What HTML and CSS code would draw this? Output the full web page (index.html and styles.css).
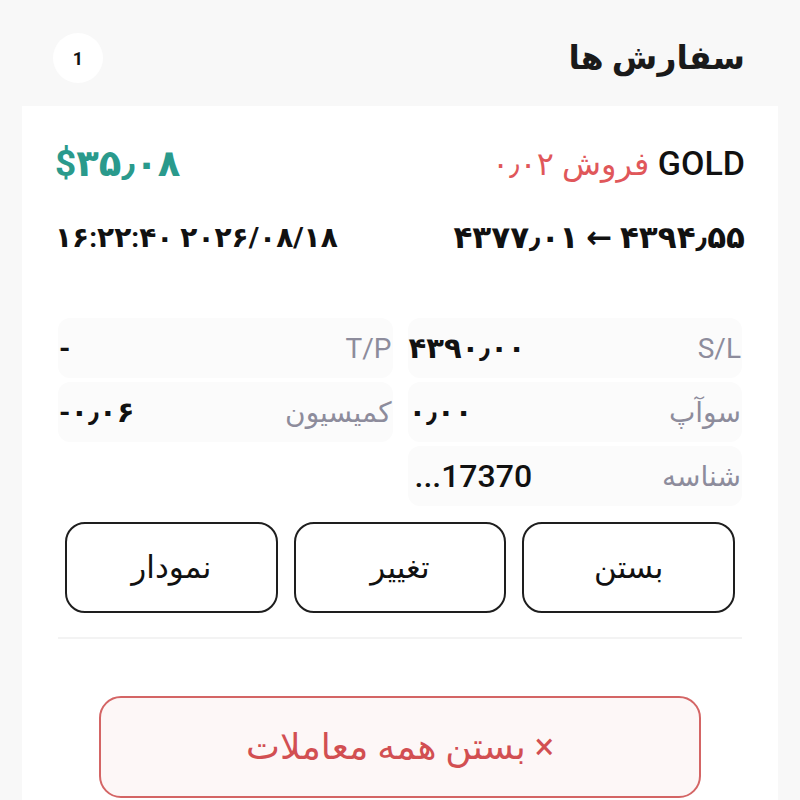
FILE: index.html
```html
<!DOCTYPE html>
<html lang="fa" dir="rtl">
<head>
    <meta charset="UTF-8">
    <meta name="viewport" content="width=device-width, initial-scale=1.0">
    <title>سفارش ها</title>
    <link rel="stylesheet" href="styles.css">
</head>
<body>
    <div class="page-header">
        <h1 class="page-title">سفارش ها</h1>
        <span class="count-badge">1</span>
    </div>

    <div class="order-card">
        <!-- Symbol and profit -->
        <div class="order-top">
            <div class="symbol">GOLD <span class="side-sell">فروش ۰٫۰۲</span></div>
            <div class="profit">$۳۵٫۰۸</div>
        </div>

        <div class="order-sub">
            <div class="prices">۴۳۹۴٫۵۵ ← ۴۳۷۷٫۰۱</div>
            <div class="open-time">۲۰۲۶/۰۸/۱۸ ۱۶:۲۲:۴۰</div>
        </div>

        <!-- Details -->
        <div class="details">
            <div class="detail">
                <span class="label">S/L</span>
                <span class="value">۴۳۹۰٫۰۰</span>
            </div>
            <div class="detail">
                <span class="label">T/P</span>
                <span class="value">-</span>
            </div>
            <div class="detail">
                <span class="label">سوآپ</span>
                <span class="value">۰٫۰۰</span>
            </div>
            <div class="detail">
                <span class="label">کمیسیون</span>
                <span class="value">۰٫۰۶-</span>
            </div>
            <div class="detail">
                <span class="label">شناسه</span>
                <span class="value latin">17370...</span>
            </div>
        </div>

        <div class="actions">
            <button class="action-btn">بستن</button>
            <button class="action-btn">تغییر</button>
            <button class="action-btn">نمودار</button>
        </div>

        <div class="divider"></div>

        <button class="close-all">× بستن همه معاملات</button>
    </div>
</body>
</html>
```

FILE: styles.css
```css
:root {
    --sell-color: #e0575a;
    --profit-color: #2a9a8c;
    --label-color: #8d8c9c;
    --bg-page: #f8f8f8;
}

* {
    margin: 0;
    padding: 0;
    box-sizing: border-box;
    font-family: Roboto, "DejaVu Sans", sans-serif;
}

body {
    width: 800px;
    height: 800px;
    overflow: hidden;
    background: var(--bg-page);
    color: #111;
}

.page-header {
    display: flex;
    justify-content: space-between;
    align-items: center;
    padding: 33px 55px 23px 53px;
}

.page-title {
    font-size: 33px;
    font-weight: bold;
    line-height: 50px;
    color: #1a1a1a;
}

.count-badge {
    display: flex;
    align-items: center;
    justify-content: center;
    width: 50px;
    height: 50px;
    border-radius: 50%;
    background: #fff;
    font-size: 18px;
    font-weight: bold;
}

.order-card {
    margin: 0 22px;
    min-height: 700px;
    background: #fff;
    padding: 37px 33px 0;
}

.order-top,
.order-sub {
    display: flex;
    justify-content: space-between;
    align-items: center;
}

.order-top {
    height: 40px;
}

.symbol {
    font-size: 34px;
    font-weight: 500;
}

.side-sell {
    color: var(--sell-color);
    font-size: 32px;
    font-weight: 500;
}

.profit {
    color: var(--profit-color);
    font-size: 37px;
    font-weight: bold;
}

.order-sub {
    height: 36px;
    margin-top: 36px;
    font-weight: bold;
}

.prices {
    font-size: 31px;
}

.open-time {
    font-size: 28px;
}

.details {
    display: grid;
    grid-template-columns: 1fr 1fr;
    grid-auto-rows: 60px;
    column-gap: 15px;
    row-gap: 4px;
    margin: 63px 3px 0;
}

.detail {
    display: flex;
    justify-content: space-between;
    align-items: center;
    background: #fbfbfb;
    border-radius: 12px;
    padding: 0 1px;
}

.label {
    color: var(--label-color);
    font-size: 28px;
}

.value {
    font-size: 29px;
    font-weight: bold;
}

.value.latin {
    font-size: 32px;
    font-weight: 500;
    padding-left: 6px;
}

.actions {
    display: flex;
    gap: 16px;
    margin-top: 16px;
    padding: 0 10px;
}

.action-btn {
    flex: 1;
    height: 91px;
    border: 2px solid #1e1e1e;
    border-radius: 20px;
    background: #fff;
    color: #111;
    font-size: 31px;
    font-weight: 500;
}

.divider {
    height: 2px;
    margin: 24px 3px 0;
    background: #f3f3f3;
}

.close-all {
    display: block;
    height: 102px;
    margin: 57px 44px 0;
    width: calc(100% - 88px);
    border: 2px solid #d46565;
    border-radius: 22px;
    background: #fdf7f7;
    color: #d24f52;
    font-size: 36px;
}
```
